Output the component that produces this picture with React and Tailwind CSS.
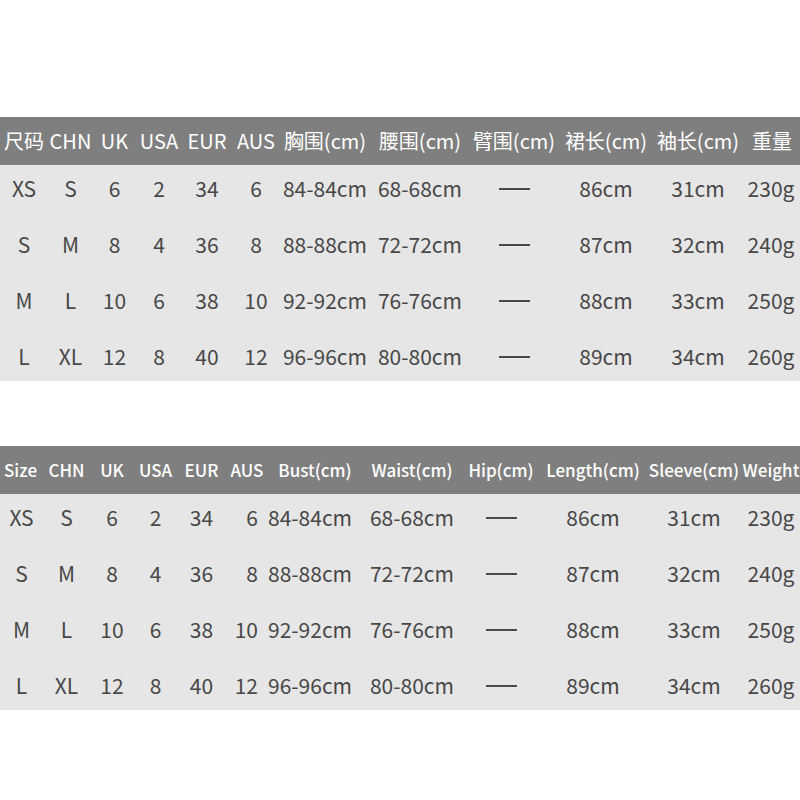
import React from "react";

const font = { fontFamily: '"Noto Sans CJK SC", "Noto Sans", sans-serif' };

const cnCols = "grid grid-cols-[48px_45px_43px_46px_50px_48px_90px_100px_88px_96px_88px_58px]";
const enCols = "grid grid-cols-[43px_47px_44px_43px_49px_42px_94px_100px_78px_106px_96px_58px]";

const cnHead = ["尺码", "CHN", "UK", "USA", "EUR", "AUS", "胸围(cm)", "腰围(cm)", "臂围(cm)", "裙长(cm)", "袖长(cm)", "重量"];
const enHead = ["Size", "CHN", "UK", "USA", "EUR", "AUS", "Bust(cm)", "Waist(cm)", "Hip(cm)", "Length(cm)", "Sleeve(cm)", "Weight"];

const rows = [
  ["XS", "S", "6", "2", "34", "6", "84-84cm", "68-68cm", "-", "86cm", "31cm", "230g"],
  ["S", "M", "8", "4", "36", "8", "88-88cm", "72-72cm", "-", "87cm", "32cm", "240g"],
  ["M", "L", "10", "6", "38", "10", "92-92cm", "76-76cm", "-", "88cm", "33cm", "250g"],
  ["L", "XL", "12", "8", "40", "12", "96-96cm", "80-80cm", "-", "89cm", "34cm", "260g"],
];

const Dash = () => <span className="block w-[31px] h-[1.5px] bg-[#4a4a4a]"></span>;

const SizeTable = ({ cols, head, headClass, english }) => {
  return (
    <div className="w-[800px]">
      <div className={`${cols} h-[48px] bg-[#7f7f7f] text-white items-center ${headClass}`}>
        {head.map((h, i) => (
          <div
            key={i}
            className={
              !english && i === 11
                ? "flex justify-center whitespace-nowrap pl-[2px]"
                : english && i === 0
                ? "flex justify-center whitespace-nowrap pr-[2px]"
                : "flex justify-center whitespace-nowrap"
            }
          >
            {h}
          </div>
        ))}
      </div>
      <div className="h-[216px] bg-[#e6e6e6] flex flex-col justify-between text-[#484848] text-[21px]">
        {rows.map((r, ri) => (
          <div key={ri} className={`${cols} h-[48px] items-center`}>
            {r.map((c, ci) => (
              <div
                key={ci}
                className={
                  english && ci === 5
                    ? "flex justify-end pr-[10px] whitespace-nowrap"
                    : english && ci === 6
                    ? "flex justify-start whitespace-nowrap"
                    : "flex justify-center whitespace-nowrap"
                }
              >
                {c === "-" ? <Dash /> : c}
              </div>
            ))}
          </div>
        ))}
      </div>
    </div>
  );
};

const App = () => {
  return (
    <div className="w-[800px] h-[800px] bg-white overflow-hidden" style={font}>
      <div className="pt-[117px]">
        <SizeTable cols={cnCols} head={cnHead} headClass="text-[20px]" />
      </div>
      <div className="pt-[65px]">
        <SizeTable cols={enCols} head={enHead} headClass="text-[17px] font-medium" english />
      </div>
    </div>
  );
};

export default App;
